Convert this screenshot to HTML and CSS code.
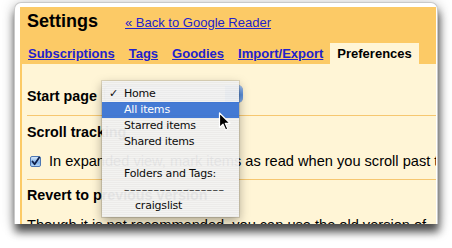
FILE: index.html
```html
<!DOCTYPE html>
<html>
<head>
<meta charset="utf-8">
<link rel="stylesheet" href="styles.css">
</head>
<body>
<div class="frame">
  <div class="panel">
    <div class="header">
      <span class="title">Settings</span>
      <a class="back" href="#">« Back to Google Reader</a>
    </div>
    <div class="tabs">
      <a class="tab" href="#">Subscriptions</a>
      <a class="tab" href="#">Tags</a>
      <a class="tab" href="#">Goodies</a>
      <a class="tab" href="#">Import/Export</a>
      <span class="tab active">Preferences</span>
    </div>
    <div class="content">
      <div class="section s1">
        <div class="row">
          <span class="label">Start page</span>
          <span class="select"><span class="select-end"></span></span>
        </div>
      </div>
      <div class="section s2">
        <div class="label">Scroll tracking</div>
        <div class="check-row">
          <span class="checkbox"><svg width="11" height="11" viewBox="0 0 11 11"><path d="M2.5 5.5 L4.6 8.3 L9.2 1.6" fill="none" stroke="#10204a" stroke-width="1.8" stroke-linecap="round" stroke-linejoin="round"/></svg></span>
          <span class="text">In expanded view, mark items as read when you scroll past them.</span>
        </div>
      </div>
      <div class="section s3">
        <div class="label">Revert to previous version</div>
        <p class="text para">Though it is not recommended, you can use the old version of Google Reader.</p>
      </div>
    </div>
  </div>
</div>

<div class="menu">
  <div class="item"><span class="tick">✓</span>Home</div>
  <div class="item selected">All items</div>
  <div class="item">Starred items</div>
  <div class="item">Shared items</div>
  <div class="item"></div>
  <div class="item">Folders and Tags:</div>
  <div class="item dashes">–––––––––––––––––</div>
  <div class="item sub">craigslist</div>
</div>

<svg class="cursor" width="14" height="20" viewBox="0 0 14 20">
  <path d="M1.5 1 L1.5 15.5 L5 12.2 L7.6 18 L9.8 17 L7.3 11.3 L12 11.3 Z" fill="#000" stroke="#fff" stroke-width="1.2" stroke-linejoin="round"/>
</svg>
</body>
</html>
```

FILE: styles.css
```css
html, body {
  margin: 0;
  padding: 0;
  background: #ffffff;
}
body {
  width: 452px;
  height: 248px;
  overflow: hidden;
  padding: 2px 0 0 14px;
  box-sizing: border-box;
  font-family: "Liberation Sans", Arial, sans-serif;
  position: relative;
}
.frame {
  width: 424px;
  height: 222px;
  box-sizing: border-box;
  background: #ffffff;
  border: 1px solid #c9c9c9;
  border-bottom: none;
  border-radius: 7px 7px 0 0;
  padding: 4px 1px 0 5px;
  display: flex;
  flex-direction: column;
  overflow: hidden;
  box-shadow: 1px 8px 9px rgba(0,0,0,0.65), 0 2px 14px rgba(0,0,0,0.28);
}
.panel {
  flex: 1;
  background: #fcca66;
  display: flex;
  flex-direction: column;
  padding-top: 4px;
  min-height: 0;
}
.header {
  display: flex;
  align-items: baseline;
  gap: 27px;
  padding-left: 7px;
  line-height: 20px;
}
.title {
  font-weight: bold;
  font-size: 18px;
  color: #000;
}
.back {
  font-size: 13px;
  color: #2222cc;
  text-decoration: underline;
}
.tabs {
  display: flex;
  margin-top: 10px;
  padding-left: 1px;
}
.tab {
  padding: 0 7px;
  line-height: 21px;
  font-size: 13px;
  font-weight: bold;
  color: #2222cc;
  text-decoration: underline;
  white-space: nowrap;
}
.tab.active {
  background: #fff5d6;
  color: #000;
  text-decoration: none;
}
.content {
  flex: 1;
  background: #fff5d6;
  margin-left: 2px;
  padding-left: 5px;
  overflow: hidden;
  min-height: 0;
}
.section {
  border-bottom: 1px solid #f6c770;
}
.label {
  font-weight: bold;
  font-size: 14.3px;
  line-height: 16px;
  color: #000;
  white-space: nowrap;
}
.s1 {
  padding: 24px 0 11px;
}
.row {
  display: flex;
  align-items: center;
  height: 16px;
}
.select {
  margin-left: 7px;
  width: 139px;
  height: 18px;
  margin-top: -4px;
  border-radius: 5px;
  background: linear-gradient(#fafafa, #e2e2e2);
  box-shadow: inset 0 0 0 1px #a9a9a9;
  display: flex;
  justify-content: flex-end;
  overflow: hidden;
}
.select-end {
  width: 18px;
  height: 18px;
  background: linear-gradient(#a3c3ee, #5b8fdc 55%, #86b2ec);
  border-radius: 0 5px 5px 0;
}
.s2 {
  padding: 8px 0 10px;
}
.check-row {
  display: flex;
  align-items: center;
  margin-top: 13px;
  height: 16px;
}
.checkbox {
  width: 11px;
  height: 11px;
  margin-left: 3px;
  margin-right: 8px;
  box-sizing: border-box;
  border: 1px solid #4d77b3;
  border-radius: 2px;
  background: linear-gradient(#d6e8fb, #7fb1ea 60%, #b4d6f8);
  display: flex;
  flex: none;
}
.checkbox svg {
  margin: -1px;
}
.text {
  font-size: 14.6px;
  line-height: 16px;
  color: #000;
  white-space: nowrap;
}
.s3 {
  padding-top: 7px;
  border-bottom: none;
}
.para {
  margin: 14px 0 0;
  white-space: normal;
}
.menu {
  position: absolute;
  left: 102px;
  top: 81px;
  width: 137px;
  height: 136px;
  box-sizing: border-box;
  padding-top: 5px;
  background: repeating-linear-gradient(#f3f3f3 0 1px, #ebebeb 1px 2px);
  opacity: 0.95;
  box-shadow: 0 0 0 1px rgba(0,0,0,0.12), 0 4px 10px rgba(0,0,0,0.35);
  font-family: "DejaVu Sans", sans-serif;
  font-size: 11px;
  letter-spacing: -0.2px;
  color: #000;
}
.item {
  height: 16px;
  line-height: 16px;
  padding-left: 22px;
  position: relative;
  white-space: nowrap;
}
.item.selected {
  background: #3b74d4;
  color: #fff;
}
.tick {
  position: absolute;
  left: 7px;
  top: 0;
}
.item.dashes {
  letter-spacing: 0.4px;
  color: #222;
}
.item.sub {
  padding-left: 33px;
}
.cursor {
  position: absolute;
  left: 218px;
  top: 112px;
}
```
